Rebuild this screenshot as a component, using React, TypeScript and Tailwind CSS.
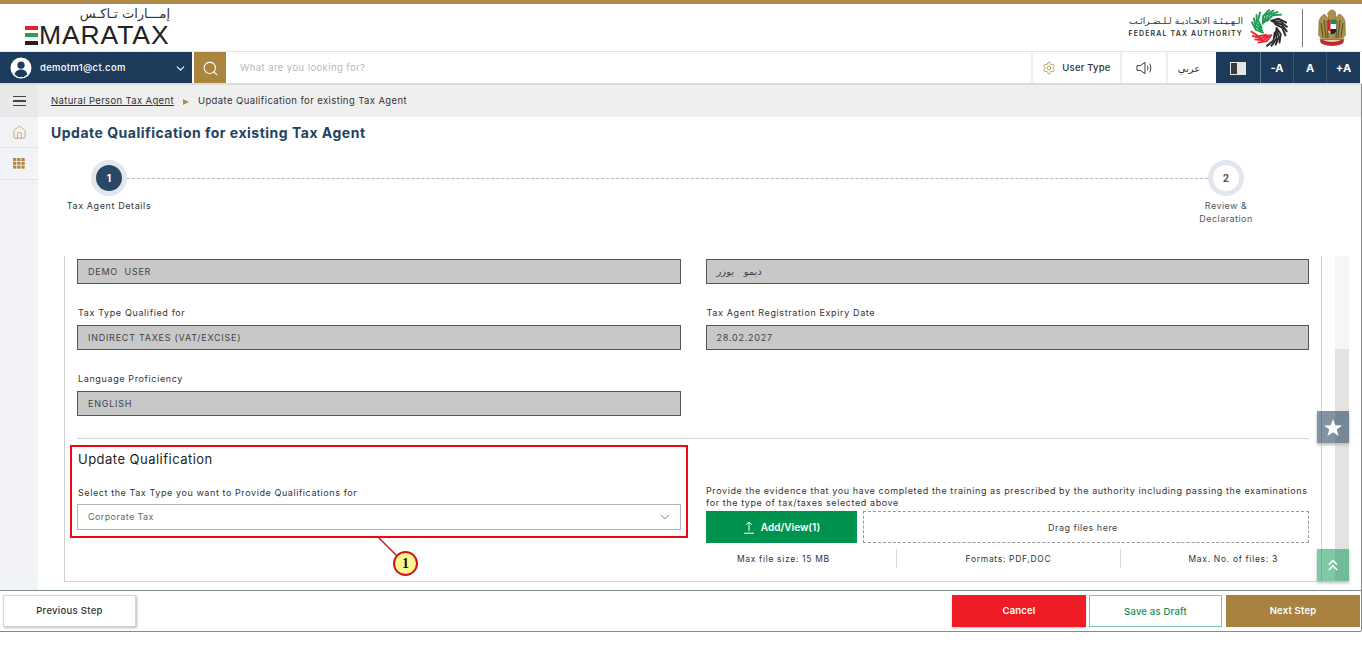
import { ChevronDown, ChevronsUp, Home, Search, Settings } from 'lucide-react';

// ─── Logos ───────────────────────────────────────────────────────────────────

function EmaratLogo() {
  return (
    <div className="ml-[25px] flex flex-col items-end w-[145px]">
      <span className="font-['DejaVu_Sans',sans-serif] text-[13px] leading-[17px] text-[#333] mt-[1px]">إمـــارات تـاكـس</span>
      <div className="flex items-center h-[22px] w-full mt-[2px]">
        <div className="flex flex-col gap-[3.500px] w-[13px] mr-[1px] shrink-0">
          <div className="h-[4px] bg-[#e0262c]" />
          <div className="h-[4px] bg-[#2c9a5a]" />
          <div className="h-[4px] bg-[#222]" />
        </div>
        <span className="text-[26.500px] leading-[22px] font-normal text-[#222] tracking-[0.900px] font-['Liberation_Sans',sans-serif]">MARATAX</span>
      </div>
    </div>
  );
}

// each blade of the ring is a set of stripes spiralling out of the hole
const RING_BLADES = [
  { start: -150, color: '#1d9a55' },
  { start: -78, color: '#2a2a2a' },
  { start: -6, color: '#2a2a2a' },
  { start: 66, color: '#e8262d' },
  { start: 138, color: '#1d9a55' },
];

function polar(r: number, deg: number) {
  const a = (deg * Math.PI) / 180;
  return `${(20 + r * Math.cos(a)).toFixed(2)} ${(20 + r * Math.sin(a)).toFixed(2)}`;
}

function RingLogo() {
  return (
    <svg viewBox="0 0 40 40" className="w-[38px] h-[38px] shrink-0">
      {RING_BLADES.map((b) =>
        [0, 1, 2, 3].map((s) => {
          const t = b.start + s * 14;
          return (
            <path
              key={t}
              d={`M${polar(7.500, t)}L${polar(14, t + 34)}L${polar(19.500, t + 62)}`}
              fill="none"
              stroke={b.color}
              strokeWidth="2"
            />
          );
        }),
      )}
    </svg>
  );
}

function FalconCrest() {
  return (
    <svg viewBox="0 0 30 38" className="w-[30px] h-[38px] shrink-0">
      <path d="M15 1c-2 0-3 1-3.500 3l-1.500 1 1.500.5-.5 4-3-4C5 6 2.500 9 2 13l-.5 13 4 5h19l4-5-.5-13c-.5-4-3-7-6-8l-3 4-.5-5C18 2 17 1 15 1z" fill="#ad9148" stroke="#6b5523" strokeWidth="0.500" />
      <path d="M4 14l2 14M7 11l2 18M10 12l1 17M26 14l-2 14M23 11l-2 18M20 12l-1 17" stroke="#3c3522" strokeWidth="0.800" />
      <path d="M10.500 11h9v9c0 3-2 5-4.500 5s-4.500-2-4.500-5z" fill="#fff" stroke="#444" strokeWidth="0.500" />
      <path d="M10.500 11h3v12c-2-1-3-2-3-3z" fill="#d5232a" />
      <path d="M13.500 11h6v4h-6z" fill="#1b8a4b" />
      <path d="M13.500 20h6c0 3-2 5-4.500 5-.5 0-1 0-1.500-.5z" fill="#222" />
      <path d="M3 30c7 4 17 4 24 0l-1 4c-6 3.500-16 3.500-22 0z" fill="#c8242b" stroke="#8d1a1f" strokeWidth="0.400" />
    </svg>
  );
}

// ─── Small icons ─────────────────────────────────────────────────────────────

function UserAvatar() {
  return (
    <svg viewBox="0 0 22 22" className="w-[22px] h-[22px] shrink-0">
      <circle cx="11" cy="11" r="10.500" fill="#fff" />
      <circle cx="11" cy="8.200" r="3.600" fill="#1c3a5a" />
      <path d="M4.600 17.400c.8-3.600 3.400-5 6.400-5s5.600 1.400 6.400 5a9 9 0 0 1-12.800 0z" fill="#1c3a5a" />
    </svg>
  );
}

function SpeakerIcon() {
  return (
    <svg viewBox="0 0 18 14" className="w-[17px] h-[14px]" fill="none" stroke="#333" strokeWidth="1">
      <path d="M1 4.500h3.500L9.500 1v12L4.500 9.500H1z" />
      <path d="M12 4.500c.8 1.500.8 3.500 0 5M14.500 2.500c1.600 2.800 1.600 6.200 0 9" />
    </svg>
  );
}

function GridIcon() {
  return (
    <svg viewBox="0 0 12 11" className="w-[12px] h-[11px]" fill="#b2873f">
      {[0, 4.200, 8.400].map((x) =>
        [0, 3.800, 7.600].map((y) => <rect key={`${x}-${y}`} x={x} y={y} width="3.300" height="3" />),
      )}
    </svg>
  );
}

function UploadIcon() {
  return (
    <svg viewBox="0 0 12 13" className="w-[12px] h-[13px]" fill="none" stroke="#fff" strokeWidth="1">
      <path d="M6 10V1M3.200 3.600L6 1l2.800 2.600M1 12.200h10" />
    </svg>
  );
}

function StarIcon() {
  return (
    <svg viewBox="0 0 18 17" className="w-[18px] h-[17px]" fill="#fff">
      <polygon points="9,0 11.300,6.300 18,6.500 12.700,10.600 14.600,17 9,13.200 3.400,17 5.300,10.600 0,6.500 6.700,6.300" />
    </svg>
  );
}

// ─── Top rows ────────────────────────────────────────────────────────────────

function Header() {
  return (
    <header className="flex items-start justify-between h-[47px] bg-white shrink-0">
      <EmaratLogo />
      <div className="flex items-center h-[47px] pr-[15px]">
        <div className="flex flex-col items-end mr-[7px]">
          <span className="font-['DejaVu_Sans',sans-serif] text-[9px] leading-[11px] text-[#333]">الـهـيـئـة الاتحـاديـة لـلـضـرائـب</span>
          <span className="text-[7px] leading-[11px] font-semibold tracking-[1.150px] text-[#333] mt-[1px]">FEDERAL TAX AUTHORITY</span>
        </div>
        <RingLogo />
        <div className="w-px h-[38px] bg-[#777] ml-[14px] mr-[14px]" />
        <FalconCrest />
      </div>
    </header>
  );
}

function NavBar() {
  return (
    <nav className="flex h-[34px] bg-white border-t border-[#e3e3e3] border-b-2 border-b-[#dcdcdc] shrink-0">
      <div className="flex items-center w-[192px] bg-[#1c3a5a] pt-[1px] pl-[10px] pr-[5px] text-white">
        <UserAvatar />
        <span className="ml-[8px] text-[9.500px] font-medium tracking-[0.300px]">demotm1@ct.com</span>
        <ChevronDown className="ml-auto w-[13px] h-[13px]" strokeWidth={2} />
      </div>
      <div className="flex items-center justify-center w-[32px] ml-[2px] pt-[2px] bg-[#ab8440]">
        <Search className="w-[17px] h-[17px] text-white" strokeWidth={1.500} />
      </div>
      <div className="flex items-center flex-1 pt-[1px] pl-[14px] text-[9.500px] tracking-[0.420px] text-[#b9b9b9]">What are you looking for?</div>
      <div className="flex items-center justify-center gap-[6px] w-[91px] pt-[1px] border-x-2 border-[#efefef] text-[9.500px] font-medium tracking-[0.200px] text-[#333]">
        <Settings className="w-[14px] h-[14px] text-[#b2873f]" strokeWidth={1.300} />
        User Type
      </div>
      <div className="flex items-center justify-center w-[46px] pt-[1px] border-r-2 border-[#efefef]">
        <SpeakerIcon />
      </div>
      <div className="flex items-center justify-center w-[48px] pt-[1px] pr-[6px] font-['DejaVu_Sans',sans-serif] text-[10px] text-[#333]">عربي</div>
      <div className="flex w-[144px] mr-[2px] bg-[#1c3a5a] text-white text-[11px] font-bold">
        <div className="flex items-center justify-center w-[45px] pt-[1px] border-r border-[#61758c]">
          <div className="flex w-[16px] h-[13px]">
            <div className="w-1/2 bg-[#3a3a3a] border border-[#e5e5e5]" />
            <div className="w-1/2 bg-[#e5e5e5]" />
          </div>
        </div>
        <div className="flex items-center justify-center w-[33px] pt-[1px] border-r border-[#3c5672]">-A</div>
        <div className="flex items-center justify-center w-[33px] pt-[1px] border-r border-[#3c5672]">A</div>
        <div className="flex items-center justify-center flex-1 pt-[1px]">+A</div>
      </div>
    </nav>
  );
}

function Sidebar() {
  return (
    <aside className="flex flex-col w-[38px] bg-[#f1f3f6] shrink-0">
      <div className="flex flex-col items-center justify-center gap-[3px] h-[32px] bg-[#e9e9e9]">
        <div className="w-[13px] h-[1.500px] bg-[#444]" />
        <div className="w-[13px] h-[1.500px] bg-[#444]" />
        <div className="w-[13px] h-[1.500px] bg-[#444]" />
      </div>
      <div className="flex items-center justify-center h-[31px] border-b border-[#e4e6e9]">
        <Home className="w-[15px] h-[15px] text-[#bf9a5c]" strokeWidth={1.300} />
      </div>
      <div className="relative flex items-center justify-center h-[32px] border-b border-[#e4e6e9]">
        <GridIcon />
        <div className="absolute right-[2px] bottom-[1px] w-0 h-0 border-l-[4px] border-l-transparent border-b-[4px] border-b-white" />
      </div>
    </aside>
  );
}

// ─── Stepper ─────────────────────────────────────────────────────────────────

function Stepper() {
  return (
    <div className="flex items-start pl-[28px] pr-[92px] mt-[18px] h-[87px] shrink-0">
      <div className="flex flex-col items-center w-[86px] shrink-0 z-10">
        <div className="flex items-center justify-center w-[36px] h-[36px] rounded-full bg-[#e2e7ee]">
          <div className="flex items-center justify-center w-[26px] h-[26px] rounded-full bg-[#2a4866] text-white text-[10px] font-bold">1</div>
        </div>
        <span className="mt-[3px] text-[9px] leading-[14px] tracking-[0.600px] text-[#333] whitespace-nowrap">Tax Agent Details</span>
      </div>
      <div className="flex-1 mt-[17.500px] -mx-[25px] border-t border-dashed border-[#b5b5b5]" />
      <div className="flex flex-col items-center w-[86px] shrink-0 z-10">
        <div className="flex items-center justify-center w-[36px] h-[36px] rounded-full bg-[#e2e7ee]">
          <div className="flex items-center justify-center w-[26px] h-[26px] rounded-full bg-white text-[#555] text-[10px] font-bold">2</div>
        </div>
        <span className="mt-[3px] text-[9px] leading-[13px] tracking-[0.450px] text-[#555] text-center">
          Review &
          <br />
          Declaration
        </span>
      </div>
    </div>
  );
}

// ─── Form pieces ─────────────────────────────────────────────────────────────

interface FieldProps {
  label?: string;
  value: string;
  rtl?: boolean;
}

function ReadonlyField({ label, value, rtl }: FieldProps) {
  return (
    <div className="flex flex-col flex-1 min-w-0">
      {label && <label className="mb-[6px] ml-[1px] text-[9px] leading-[13px] tracking-[0.630px] text-[#333]">{label}</label>}
      <div className={`flex items-center h-[25px] px-[10px] bg-[#c8c8c8] border border-[#555] whitespace-pre text-[#444] ${rtl ? "font-['DejaVu_Sans',sans-serif] text-[10px]" : 'text-[9px] tracking-[0.750px]'}`}>
        {value}
      </div>
    </div>
  );
}

function UploadInfo({ text, border }: { text: string; border?: boolean }) {
  return (
    <div className={`flex items-center justify-center w-[225px] h-[19px] pt-[1px] text-[8.500px] tracking-[0.680px] text-[#333] ${border ? 'border-l border-[#d3dbe3]' : ''}`}>
      {text}
    </div>
  );
}

function FormPanel() {
  return (
    <div className="relative flex-1 min-h-0 ml-[26px] mr-[39px] mt-[9px] border-l border-b border-r border-[#d0d0d0] pt-[3px] pl-[12px] pr-[12px]">
      <div className="flex gap-[25px]">
        <ReadonlyField value="DEMO  USER" />
        <ReadonlyField value="ديمو   يوزر" rtl />
      </div>
      <div className="flex gap-[25px] mt-[22px]">
        <ReadonlyField label="Tax Type Qualified for" value="INDIRECT TAXES (VAT/EXCISE)" />
        <ReadonlyField label="Tax Agent Registration Expiry Date" value="28.02.2027" />
      </div>
      <div className="flex gap-[25px] mt-[22px]">
        <ReadonlyField label="Language Proficiency" value="ENGLISH" />
        <div className="flex-1" />
      </div>
      <div className="h-px bg-[#d6d6d6] mt-[22px]" />

      <div className="flex gap-[18px] mt-[6px]">
        {/* Red annotation box around the tax type select */}
        <div className="flex flex-col w-[618px] -ml-[7px] h-[93px] border-2 border-[#ee0a14] pl-[5px] pr-[5px] pt-[4px] shrink-0">
          <h2 className="ml-[1px] text-[13px] leading-[16px] font-normal tracking-[0.480px] text-[#222]">Update Qualification</h2>
          <label className="mt-[20px] ml-[1px] text-[9px] leading-[12px] tracking-[0.580px] text-[#333]">Select the Tax Type you want to Provide Qualifications for</label>
          <div className="flex items-center justify-between h-[26px] mt-[5px] pl-[10px] pr-[8px] border border-[#b5b5b5] text-[9px] tracking-[0.400px] text-[#666]">
            Corporate Tax
            <ChevronDown className="w-[14px] h-[14px] text-[#555]" strokeWidth={1.300} />
          </div>
        </div>
        <div className="flex flex-col flex-1 min-w-0 pt-[40px]">
          <p className="text-[9px] leading-[12px] tracking-[0.590px] text-[#333] whitespace-nowrap">
            Provide the evidence that you have completed the training as prescribed by the authority including passing the examinations
            <br />
            for the type of tax/taxes selected above
          </p>
          <div className="flex gap-[6px] h-[32px] mt-[2px]">
            <div className="flex items-center justify-center gap-[6px] w-[151px] pt-[1px] bg-[#00934f] text-white text-[10px] font-semibold">
              <UploadIcon />
              Add/View(1)
            </div>
            <div className="flex items-center justify-center flex-1 pt-[2px] pr-[6px] border border-dashed border-[#9a9a9a] text-[9px] tracking-[0.500px] text-[#444]">Drag files here</div>
          </div>
          <div className="flex mt-[6px] -ml-[35px] -mr-[36px]">
            <UploadInfo text="Max file size: 15 MB" />
            <UploadInfo text="Formats: PDF,DOC" border />
            <UploadInfo text="Max. No. of files: 3" border />
          </div>
        </div>
      </div>

      {/* Callout number on the annotation */}
      <svg viewBox="0 0 44 34" className="absolute left-[313px] top-[281px] w-[44px] h-[34px] overflow-visible">
        <path d="M0 0l19 19" stroke="#c4161c" strokeWidth="1.500" fill="none" />
      </svg>
      <div className="absolute left-[328px] top-[295px] flex items-center justify-center w-[25px] h-[25px] rounded-full bg-[#fdf68e] border-2 border-[#d0121a] text-[14px] font-bold text-[#111] font-['Liberation_Serif',serif]">1</div>
    </div>
  );
}

// ─── Footer ──────────────────────────────────────────────────────────────────

function Footer() {
  return (
    <footer className="flex items-start h-[42px] border-y border-[#7f8c8d] mr-[1px] pt-[4px] pl-[3px] pr-[1px] bg-white shrink-0">
      <button className="w-[133px] h-[32px] pt-[1px] bg-white border border-[#d5d5d5] shadow-[1px_1px_2px_#bbb] text-[9.500px] font-medium tracking-[0.300px] text-[#333]">Previous Step</button>
      <button className="w-[134px] h-[32px] ml-auto bg-[#ee1c25] shadow-[0_1px_2px_#bbb] text-white text-[9.500px] font-semibold tracking-[0.200px]">Cancel</button>
      <button className="w-[133px] h-[32px] ml-[3px] bg-white border border-[#7cc5a3] text-[#0f8f55] text-[9.500px] font-medium tracking-[0.200px] pt-[3px]">Save as Draft</button>
      <button className="w-[134px] h-[32px] ml-[4px] bg-[#a98240] text-white text-[9.500px] font-semibold tracking-[0.200px]">Next Step</button>
    </footer>
  );
}

// ─── Page ────────────────────────────────────────────────────────────────────

export default function App() {
  return (
    <div className="relative flex flex-col w-[1362px] h-[648px] overflow-hidden bg-white font-['Inter','DejaVu_Sans',sans-serif]">
      <div className="h-[4px] bg-[#ae8c47] shrink-0" />
      <Header />
      <NavBar />
      <div className="flex h-[505px] shrink-0 mr-[1px]">
        <Sidebar />
        <main className="flex flex-col flex-1 min-w-0">
          <div className="flex items-center h-[32px] pt-[1px] bg-[#efefef] pl-[13px] text-[9.500px] tracking-[0.350px] text-[#333] shrink-0">
            <span className="underline">Natural Person Tax Agent</span>
            <span className="mx-[9px] w-0 h-0 border-l-[6px] border-l-[#b08d45] border-y-[3.500px] border-y-transparent" />
            <span className="tracking-[0.400px]">Update Qualification for existing Tax Agent</span>
          </div>
          <h1 className="pl-[13px] mt-[7px] text-[14px] leading-[18px] font-bold tracking-[0.500px] text-[#24425f] shrink-0">Update Qualification for existing Tax Agent</h1>
          <Stepper />
          <FormPanel />
          <div className="h-[8px] shrink-0" />
        </main>
      </div>
      <Footer />

      {/* Right hairline of the page frame */}
      <div className="absolute right-0 top-[84px] bottom-[17px] w-px bg-[#8a8a8a]" />

      {/* Scroll track */}
      <div className="absolute left-[1335px] top-[256px] w-[14px] h-[325px] flex flex-col">
        <div className="h-[93px] bg-[#f6f6f6]" />
        <div className="flex-1 bg-[#e3e3e3]" />
      </div>

      {/* Floating buttons */}
      <div className="absolute left-[1317px] top-[411px] flex items-center justify-center w-[32px] h-[32px] bg-[#1c3a5a]/55 shadow-[0_2px_3px_#bbb]">
        <StarIcon />
      </div>
      <div className="absolute left-[1317px] top-[549px] flex items-center justify-center w-[32px] h-[32px] bg-[#00934f]/50 shadow-[0_2px_3px_#bbb]">
        <ChevronsUp className="w-[18px] h-[18px] text-white" strokeWidth={2} />
      </div>
    </div>
  );
}
